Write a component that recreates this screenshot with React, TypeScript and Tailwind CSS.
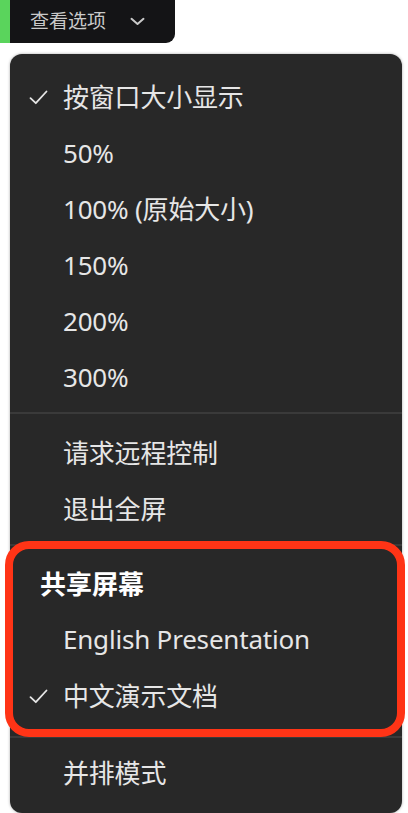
import React from "react";

const FONT = {
  fontFamily:
    '"Noto Sans", "Noto Sans CJK SC", "Liberation Sans", sans-serif',
};

function Check() {
  return (
    <svg width="19" height="15" viewBox="0 0 19 15" className="shrink-0">
      <path
        d="M1.5 8.2 L6.8 13.2 L17.5 1.5"
        fill="none"
        stroke="#e6e6e6"
        strokeWidth="1.8"
        strokeLinecap="round"
        strokeLinejoin="round"
      />
    </svg>
  );
}

function Item({
  label,
  checked,
  h = "h-[56px]",
}: {
  label: string;
  checked?: boolean;
  h?: string;
}) {
  return (
    <div className={`flex items-center ${h}`}>
      <div className="w-[53px] flex justify-end pr-[15px]">
        {checked && <Check />}
      </div>
      <span className="text-[26px] text-[#e6e6e6] leading-none tracking-[-0.2px]">
        {label}
      </span>
    </div>
  );
}

function Separator({ className }: { className: string }) {
  return <div className={`h-[2px] bg-[#3a3a3a] ${className}`} />;
}

export default function App() {
  return (
    <div
      className="w-[408px] h-[813px] bg-white overflow-hidden relative"
      style={FONT}
    >
      <div className="flex h-[43px] w-[175px] bg-[#141416] rounded-br-[9px]">
        <div className="w-[10px] bg-[#5ad45c]" />
        <div className="flex items-center pl-[20px] gap-[24px]">
          <span className="text-[19px] text-[#c9c9c9] leading-none">
            查看选项
          </span>
          <svg width="15" height="9" viewBox="0 0 15 9">
            <path
              d="M1.5 1.8 L7.5 7 L13.5 1.8"
              fill="none"
              stroke="#c9c9c9"
              strokeWidth="2"
              strokeLinecap="round"
              strokeLinejoin="round"
            />
          </svg>
        </div>
      </div>

      <div className="mt-[11px] ml-[10px] w-[392px] bg-[#282828] rounded-[12px] shadow-[0_0_3px_rgba(0,0,0,0.35)] pt-[15px] pb-[12px]">
        <Item label="按窗口大小显示" checked />
        <Item label="50%" />
        <Item label="100% (原始大小)" />
        <Item label="150%" />
        <Item label="200%" />
        <Item label="300%" />
        <Separator className="mt-[7px] mb-[11px]" />
        <Item label="请求远程控制" />
        <Item label="退出全屏" />
        <Separator className="mt-[7px] mb-[11px]" />
        <div className="relative">
          <div className="flex items-center h-[54px] pl-[30px]">
            <span className="text-[26px] font-bold text-white leading-none">
              共享屏幕
            </span>
          </div>
          <Item label="English Presentation" />
          <Item label="中文演示文档" checked h="h-[58px]" />
          <div className="absolute left-[-5px] right-[-3px] top-[-16px] bottom-[-12px] border-[8px] border-[#ff3416] rounded-[24px]" />
        </div>
        <Separator className="mt-[11px] mb-[7px]" />
        <Item label="并排模式" />
      </div>
    </div>
  );
}
